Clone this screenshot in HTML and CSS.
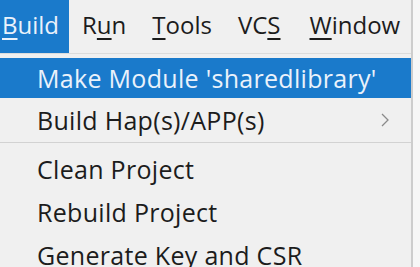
FILE: index.html
```html
<!DOCTYPE html>
<html lang="en">
<head>
    <meta charset="UTF-8">
    <title>Build Menu</title>
    <link rel="stylesheet" href="styles.css">
</head>
<body>
    <div class="frame">
        <!-- Menu bar -->
        <nav class="menubar">
            <div class="menubar-item active"><u>B</u>uild</div>
            <div class="menubar-item">R<u>u</u>n</div>
            <div class="menubar-item"><u>T</u>ools</div>
            <div class="menubar-item">VC<u>S</u></div>
            <div class="menubar-item"><u>W</u>indow</div>
        </nav>

        <!-- Build dropdown -->
        <ul class="dropdown">
            <li class="item selected">Make Module 'sharedlibrary'</li>
            <li class="item tall">Build Hap(s)/APP(s)
                <svg class="chevron" width="8" height="14" viewBox="0 0 8 14">
                    <path d="M1 1 L7 7 L1 13" fill="none" stroke="#8a8a8a" stroke-width="1.3"/>
                </svg>
            </li>
            <li class="separator"></li>
            <li class="item">Clean Project</li>
            <li class="item">Rebuild Project</li>
            <li class="item">Generate Key and CSR</li>
        </ul>
    </div>
</body>
</html>
```

FILE: styles.css
```css
* {
    margin: 0;
    padding: 0;
    box-sizing: border-box;
}

body {
    font-family: "Open Sans", "Noto Sans", sans-serif;
    background: #f7f7f7;
    color: #1c1c1c;
    width: 420px;
    height: 267px;
    overflow: hidden;
}

.frame {
    width: 413px;
    height: 267px;
    background: #f0f0f0;
    border-right: 2px solid #cdcdcd;
}

.menubar {
    display: flex;
    height: 53px;
    font-size: 24px;
}

.menubar-item {
    padding: 0 13px;
    line-height: 50px;
}

.menubar-item:first-child {
    padding: 0 10px 0 2px;
}

.menubar-item:last-child {
    padding-left: 16px;
}

.menubar-item.active {
    background: #1a7acb;
    color: #eaf2fb;
}

.menubar-item u {
    text-underline-offset: 4px;
    text-decoration-thickness: 1.5px;
}

.dropdown {
    list-style: none;
    padding-top: 4px;
    border-top: 1px solid #dcdcdc;
    font-size: 25px;
    letter-spacing: 0.3px;
}

.item {
    display: flex;
    align-items: center;
    justify-content: space-between;
    height: 43px;
    padding: 0 22px 0 37px;
}

.item.selected {
    height: 40px;
    background: #1a7acb;
    color: #eaf2fb;
}

.item.tall {
    height: 44px;
}

.separator {
    height: 1px;
    background: #d2d2d2;
    margin: 0 0 4px;
}
```
